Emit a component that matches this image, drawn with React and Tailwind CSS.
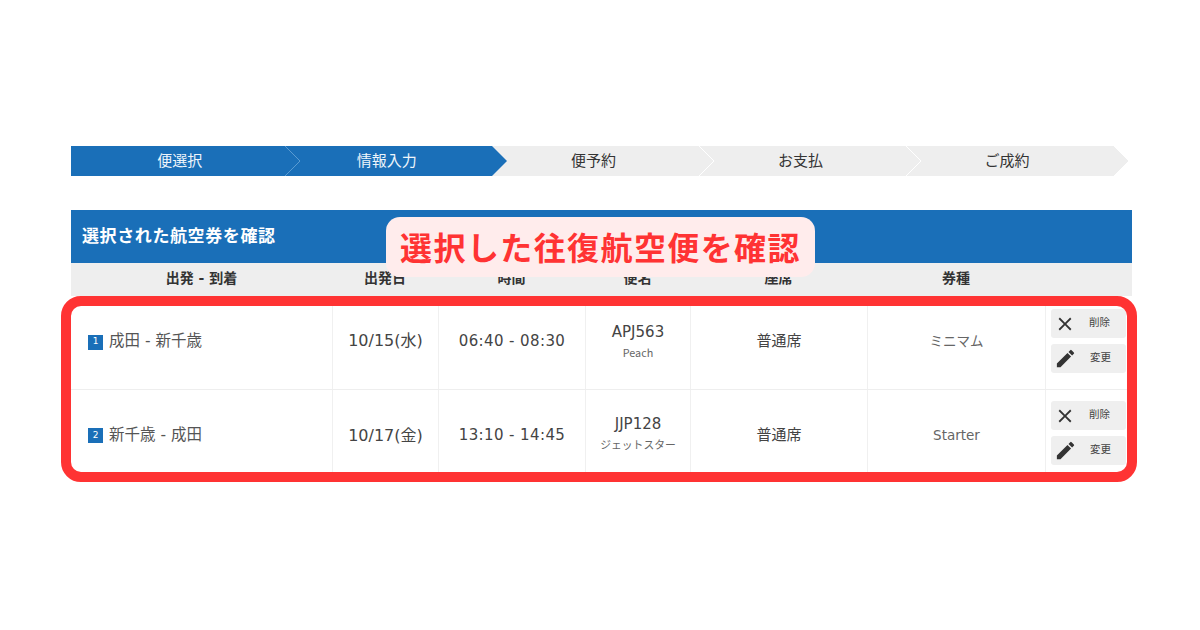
import { MdClose, MdEdit } from "react-icons/md";

const steps = [
  { label: "便選択", width: "w-[213.5px]", active: true, pad: "pl-[4px] pb-[2px]" },
  { label: "情報入力", width: "w-[207.5px]", active: true, pad: "pr-[3px] pb-[2px]" },
  { label: "便予約", width: "w-[207px]", active: false, pad: "pr-[4px] pb-[2px]" },
  { label: "お支払", width: "w-[207px]", active: false, pad: "pr-[4px] pb-[2px]" },
  { label: "ご成約", width: "w-[208px]", active: false, pad: "pr-[6px] pb-[2px]" },
];

const flights = [
  { no: "1", route: "成田 - 新千歳", date: "10/15(水)", time: "06:40 - 08:30", code: "APJ563", airline: "Peach", seat: "普通席", fare: "ミニマム" },
  { no: "2", route: "新千歳 - 成田", date: "10/17(金)", time: "13:10 - 14:45", code: "JJP128", airline: "ジェットスター", seat: "普通席", fare: "Starter" },
];

const columns = "grid grid-cols-[261px_106px_147px_105px_177px_178px_87px]";

function Chevron({ active, next }) {
  // arrow tip that overlaps the following step
  return (
    <svg className="absolute top-0 left-full z-10" width="16" height="30" viewBox="0 0 16 30">
      <path d="M0 0 L15 15 L0 30 Z" fill={active ? "#1a6fb8" : "#eeeeee"} />
      {(next || !active) && <path d="M0 0 L15 15 L0 30" fill="none" stroke={active ? "#5a9bd2" : "#ffffff"} strokeWidth="1" />}
    </svg>
  );
}

function ActionButton({ icon, label }) {
  return (
    <div className="w-[75px] h-[29px] bg-[#efefef] rounded-[3px] flex items-center pl-[3px]">
      {icon}
      <span className="ml-[13px] pb-[2px] text-[10.5px] text-[#444]">{label}</span>
    </div>
  );
}

export default function App() {
  return (
    <div className="w-[1200px] h-[630px] bg-white pt-[146px] pl-[71px] overflow-hidden font-['Noto_Sans_CJK_JP','Noto_Sans',sans-serif]">
      <div className="flex w-[1043px]">
        {steps.map((s, i) => (
          <div
            key={s.label}
            className={`relative h-[30px] flex items-center justify-center text-[15px] ${s.width} ${s.pad} ${s.active ? "bg-[#1a6fb8] text-[#eef5fb]" : "bg-[#eeeeee] text-[#333]"}`}
          >
            {s.label}
            <Chevron active={s.active} next={i === 0} />
          </div>
        ))}
      </div>

      <div className="relative w-[1061px] mt-[34px]">
        <div className="h-[53px] bg-[#1a6fb8] flex items-center pl-[11px] pb-[4px] text-[17px] tracking-[0.6px] font-bold text-white">選択された航空券を確認</div>

        <div className={`${columns} h-[33px] pb-[3px] bg-[#eeeeee] items-center text-center text-[14px] font-bold text-[#333] font-['DejaVu_Sans','Noto_Sans_CJK_JP',sans-serif]`}>
          <div>出発 - 到着</div>
          <div>出発日</div>
          <div>時間</div>
          <div>便名</div>
          <div>座席</div>
          <div>券種</div>
          <div></div>
        </div>

        {flights.map((f, i) => (
          <div key={f.no} className={`${columns} ${i === 0 ? "h-[94px] border-b border-[#eeeeee]" : "h-[91px]"} text-[15px] text-[#444] font-['DejaVu_Sans','Noto_Sans_CJK_JP',sans-serif]`}>
            <div className={`flex items-center pl-[17px] text-[15.5px] text-[#555] ${i === 0 ? "pb-[1px]" : ""}`}>
              <span className="w-[15px] h-[15px] bg-[#1a6fb8] text-white text-[9px] flex items-center justify-center mr-[6px]">{f.no}</span>
              {f.route}
            </div>
            <div className={`flex items-center justify-center border-l border-[#f0f0f0] text-[16px] ${i === 0 ? "pb-[3px]" : ""}`}>{f.date}</div>
            <div className={`flex items-center justify-center border-l border-[#f0f0f0] tracking-[0.4px] ${i === 0 ? "pb-[3px]" : ""}`}>{f.time}</div>
            <div className={`flex flex-col items-center justify-center border-l border-[#f0f0f0] gap-[2px] ${i === 0 ? "pb-[3px]" : "pb-[5px]"}`}>
              <span className="text-[15px] leading-[20px]">{f.code}</span>
              <span className="text-[10.8px] leading-[16px] text-[#666] font-['Noto_Sans_CJK_JP',sans-serif]">{f.airline}</span>
            </div>
            <div className={`flex items-center justify-center border-l border-[#f0f0f0] ${i === 0 ? "pb-[3px]" : ""}`}>{f.seat}</div>
            <div className={`flex items-center justify-center border-l border-[#f0f0f0] text-[13.5px] text-[#666] ${i === 0 ? "pb-[3px]" : ""}`}>{f.fare}</div>
            <div className={`flex flex-col gap-[6px] border-l border-[#f0f0f0] pl-[5px] ${i === 0 ? "pt-[13px]" : "pt-[11px]"}`}>
              <ActionButton icon={<MdClose size={22} color="#333" />} label="削除" />
              <ActionButton icon={<MdEdit size={23} color="#333" />} label="変更" />
            </div>
          </div>
        ))}

        {/* callout + red frame drawn over the table */}
        <div className="absolute left-[315px] top-[7px] w-[429px] h-[60px] pb-[3px] bg-[#ffecec] rounded-[14px] flex items-center justify-center text-[32px] font-bold text-[#ff3333] tracking-[1.4px]">
          選択した往復航空便を確認
        </div>
        <div className="absolute left-[-10px] top-[86px] w-[1076px] h-[186px] border-[10px] border-[#ff3333] rounded-[20px]"></div>
      </div>
    </div>
  );
}
